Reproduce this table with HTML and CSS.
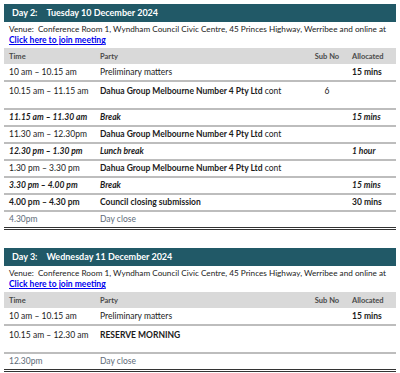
FILE: index.html
```html
<!DOCTYPE html>
<html>
<head>
<meta charset="utf-8">
<link rel="stylesheet" href="styles.css">
</head>
<body>
<div class="page">
  <section class="day">
    <div class="day-bar"><span class="day-no">Day 2:</span><span>Tuesday 10 December 2024</span></div>
    <div class="venue">Venue:&nbsp;&nbsp;Conference Room 1, Wyndham Council Civic Centre, 45 Princes Highway, Werribee and online at</div>
    <a class="join" href="#">Click here to join meeting</a>
    <table class="sched">
      <colgroup><col class="c-time"><col class="c-party"><col class="c-sub"><col class="c-alloc"></colgroup>
      <thead><tr><th>Time</th><th>Party</th><th class="sub">Sub No</th><th>Allocated</th></tr></thead>
      <tbody>
        <tr><td>10 am – 10.15 am</td><td>Preliminary matters</td><td class="sub"></td><td class="b">15 mins</td></tr>
        <tr class="tall"><td>10.15 am – 11.15 am</td><td><b>Dahua Group Melbourne Number 4 Pty Ltd</b> cont</td><td class="sub">6</td><td></td></tr>
        <tr class="bi"><td>11.15 am – 11.30 am</td><td>Break</td><td class="sub"></td><td>15 mins</td></tr>
        <tr><td>11.30 am – 12.30pm</td><td><b>Dahua Group Melbourne Number 4 Pty Ltd</b> cont</td><td class="sub"></td><td></td></tr>
        <tr class="bi"><td>12.30 pm – 1.30 pm</td><td>Lunch break</td><td class="sub"></td><td>1 hour</td></tr>
        <tr><td>1.30 pm – 3.30 pm</td><td><b>Dahua Group Melbourne Number 4 Pty Ltd</b> cont</td><td class="sub"></td><td></td></tr>
        <tr class="bi"><td>3.30 pm – 4.00 pm</td><td>Break</td><td class="sub"></td><td>15 mins</td></tr>
        <tr class="bold"><td>4.00 pm – 4.30 pm</td><td>Council closing submission</td><td class="sub"></td><td>30 mins</td></tr>
        <tr class="close"><td>4.30pm</td><td>Day close</td><td class="sub"></td><td></td></tr>
      </tbody>
    </table>
  </section>
  <section class="day day3">
    <div class="day-bar"><span class="day-no">Day 3:</span><span>Wednesday 11 December 2024</span></div>
    <div class="venue">Venue:&nbsp;&nbsp;Conference Room 1, Wyndham Council Civic Centre, 45 Princes Highway, Werribee and online at</div>
    <a class="join" href="#">Click here to join meeting</a>
    <table class="sched">
      <colgroup><col class="c-time"><col class="c-party"><col class="c-sub"><col class="c-alloc"></colgroup>
      <thead><tr><th>Time</th><th>Party</th><th class="sub">Sub No</th><th>Allocated</th></tr></thead>
      <tbody>
        <tr><td>10 am – 10.15 am</td><td>Preliminary matters</td><td class="sub"></td><td class="b">15 mins</td></tr>
        <tr class="tall"><td>10.15 am – 12.30 am</td><td><b>RESERVE MORNING</b></td><td class="sub"></td><td></td></tr>
        <tr class="close"><td>12.30pm</td><td>Day close</td><td class="sub"></td><td></td></tr>
      </tbody>
    </table>
  </section>
</div>
</body>
</html>
```

FILE: styles.css
```css
html, body {
  margin: 0;
  padding: 0;
  background: #ffffff;
}
body {
  font-family: Lato, "Open Sans", sans-serif;
  font-size: 8.5px;
  color: #1b1b1b;
}
.page {
  padding: 4px 4px 0 4px;
}
.day-bar {
  background: #215967;
  color: #ffffff;
  font-weight: bold;
  height: 18px;
  line-height: 18px;
  padding-left: 8px;
  font-size: 9px;
}
.day-no {
  margin-right: 9px;
}
.venue {
  padding-left: 5px;
  height: 11px;
  line-height: 11px;
  margin-top: 2px;
  font-size: 8.2px;
  white-space: nowrap;
  overflow: hidden;
}
.join {
  display: block;
  width: max-content;
  margin-left: 5px;
  color: #0000ee;
  font-weight: bold;
  text-decoration: underline;
  height: 11px;
  line-height: 11px;
}
.sched {
  width: 100%;
  border-collapse: collapse;
  margin-top: 2px;
  table-layout: fixed;
  border-bottom: 3px double #333333;
}
.c-time { width: 91px; }
.c-sub { width: 40px; }
.c-alloc { width: 49px; }
th {
  background: #d9d9d9;
  color: #4a4a4a;
  font-weight: bold;
  font-size: 7.5px;
  text-align: left;
  height: 16px;
  padding: 0 5px;
}
th.sub, td.sub { text-align: center; }
td {
  height: 15px;
  padding: 0 5px;
  border-top: 2px solid #bdbdbd;
  white-space: nowrap;
  vertical-align: top;
  line-height: 15px;
}
tbody tr:first-child td { border-top: none; height: 16px; line-height: 16px; }
tr.tall td { height: 26px; line-height: 18px; }
tr.bi td { font-weight: bold; font-style: italic; }
tr.bold td { font-weight: bold; }
td.b { font-weight: bold; }
tr.close td { color: #5e6b78; }
.day3 {
  margin-top: 18px;
}
```
